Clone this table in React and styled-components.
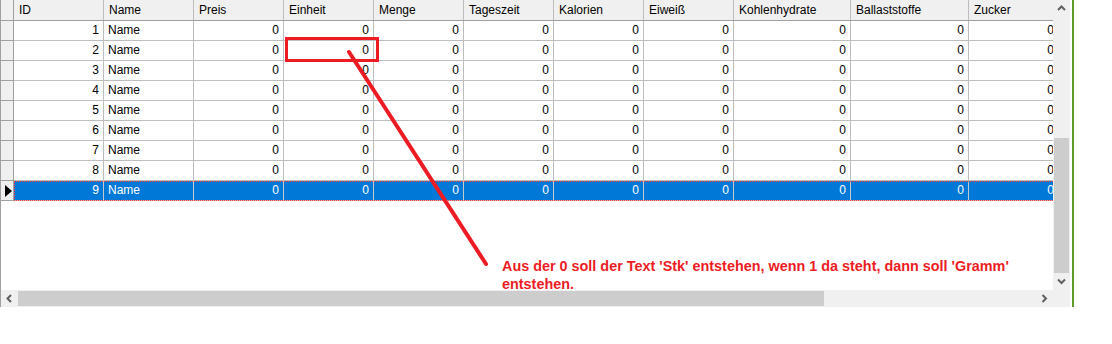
import React from "react";
import styled, { createGlobalStyle } from "styled-components";

const columns = [
  { title: "ID", width: 90, align: "right" },
  { title: "Name", width: 90, align: "left" },
  { title: "Preis", width: 90, align: "right" },
  { title: "Einheit", width: 90, align: "right" },
  { title: "Menge", width: 90, align: "right" },
  { title: "Tageszeit", width: 90, align: "right" },
  { title: "Kalorien", width: 90, align: "right" },
  { title: "Eiweiß", width: 90, align: "right" },
  { title: "Kohlenhydrate", width: 117, align: "right" },
  { title: "Ballaststoffe", width: 118, align: "right" },
  { title: "Zucker", width: 90, align: "right" },
];

const rows = [1, 2, 3, 4, 5, 6, 7, 8, 9].map((id) => [
  String(id),
  "Name",
  "0",
  "0",
  "0",
  "0",
  "0",
  "0",
  "0",
  "0",
  "0",
]);

const SELECTED = 8;

const Chevron = ({ dir }) => {
  const pts = {
    up: "1,6 4.5,2.5 8,6",
    down: "1,2.5 4.5,6 8,2.5",
    left: "6,1 2.5,4.5 6,8",
    right: "2.5,1 6,4.5 2.5,8",
  }[dir];
  return (
    <svg width="9" height="9" viewBox="0 0 9 9">
      <polyline points={pts} fill="none" stroke="#606060" strokeWidth="2" />
    </svg>
  );
};

const App = () => {
  return (
    <Page>
      <GlobalStyle />
      <Window>
        <Frame>
          <Viewport>
            <HeaderRow>
              <Corner />
              {columns.map((c) => (
                <HeadCell key={c.title} $w={c.width}>
                  {c.title}
                </HeadCell>
              ))}
            </HeaderRow>
            {rows.map((r, i) => (
              <Row key={i}>
                <RowHead>{i === SELECTED && <Pointer />}</RowHead>
                <Cells $selected={i === SELECTED}>
                  {r.map((v, j) => (
                    <Cell
                      key={j}
                      $w={columns[j].width}
                      $align={columns[j].align}
                      $selected={i === SELECTED}
                    >
                      {v}
                    </Cell>
                  ))}
                </Cells>
              </Row>
            ))}
          </Viewport>
          <VScroll>
            <ArrowBox>
              <Chevron dir="up" />
            </ArrowBox>
            <VTrack>
              <VThumb />
            </VTrack>
            <ArrowBox>
              <Chevron dir="down" />
            </ArrowBox>
          </VScroll>
          <HScroll>
            <ArrowBox>
              <Chevron dir="left" />
            </ArrowBox>
            <HTrack>
              <HThumb />
            </HTrack>
            <ArrowBox>
              <Chevron dir="right" />
            </ArrowBox>
          </HScroll>
          <ScrollCorner />
        </Frame>
        <GreenEdge />
      </Window>

      <Marks width="1112" height="344">
        <rect
          x="286.5"
          y="38.5"
          width="91"
          height="22"
          fill="none"
          stroke="#ed1c24"
          strokeWidth="3"
        />
        <line
          x1="349"
          y1="52"
          x2="486"
          y2="264"
          stroke="#ed1c24"
          strokeWidth="4"
          strokeLinecap="round"
        />
      </Marks>
      <Note>
        Aus der 0 soll der Text 'Stk' entstehen, wenn 1 da steht, dann soll
        'Gramm'
        <br />
        entstehen.
      </Note>
    </Page>
  );
};
export default App;

const GlobalStyle = createGlobalStyle`
  html, body {
    margin: 0;
    padding: 0;
    background: #ffffff;
  }
  body {
    font-family: "Liberation Sans", Arial, sans-serif;
    font-size: 12px;
    color: #000000;
  }
`;

const Page = styled.div`
  position: relative;
  width: 1112px;
  height: 344px;
  overflow: hidden;
`;

const Window = styled.div`
  display: flex;
  align-items: stretch;
  height: 307px;
`;

const Frame = styled.div`
  width: 1070px;
  height: 307px;
  display: grid;
  grid-template-columns: 1052px 17px;
  grid-template-rows: 290px 17px;
  border-left: 1px solid #a0a0a0;
  background: #ffffff;
`;

const GreenEdge = styled.div`
  width: 2px;
  margin-left: 1px;
  background: #5d9b2b;
`;

const Viewport = styled.div`
  overflow: hidden;
  background: #ffffff;
`;

const HeaderRow = styled.div`
  display: flex;
  height: 21px;
  background: #f0f0f0;
  border-bottom: 1px solid #a0a0a0;
  box-sizing: border-box;
  width: max-content;
`;

const Corner = styled.div`
  width: 12px;
  flex: none;
  border-right: 1px solid #a0a0a0;
`;

const HeadCell = styled.div`
  width: ${(p) => p.$w}px;
  flex: none;
  box-sizing: border-box;
  border-right: 1px solid #bdbdbd;
  padding-left: 5px;
  line-height: 21px;
  white-space: nowrap;
`;

const Row = styled.div`
  display: flex;
  height: 20px;
  width: max-content;
`;

const RowHead = styled.div`
  width: 12px;
  flex: none;
  background: #f0f0f0;
  border-right: 1px solid #a0a0a0;
  border-bottom: 1px solid #a0a0a0;
  display: flex;
  align-items: center;
  justify-content: center;
`;

const Pointer = styled.div`
  width: 0;
  height: 0;
  margin-left: 2px;
  border-left: 7px solid #000000;
  border-top: 6px solid transparent;
  border-bottom: 6px solid transparent;
`;

const Cells = styled.div`
  display: flex;
  position: relative;
  background: ${(p) => (p.$selected ? "#0078d7" : "#ffffff")};
  &::after {
    content: "";
    display: ${(p) => (p.$selected ? "block" : "none")};
    position: absolute;
    left: 0;
    right: 0;
    top: 0;
    bottom: 0;
    border: 1px dotted #ff3b3b;
    pointer-events: none;
  }
`;

const Cell = styled.div`
  width: ${(p) => p.$w}px;
  flex: none;
  box-sizing: border-box;
  border-right: 1px solid ${(p) => (p.$selected ? "#c8c8c8" : "#bdbdbd")};
  border-bottom: 1px solid #bdbdbd;
  padding: 0 4px;
  text-align: ${(p) => p.$align};
  line-height: 19px;
  color: ${(p) => (p.$selected ? "#ffffff" : "#000000")};
  white-space: nowrap;
`;

const VScroll = styled.div`
  display: flex;
  flex-direction: column;
  background: #f0f0f0;
`;

const HScroll = styled.div`
  display: flex;
  background: #f0f0f0;
`;

const ScrollCorner = styled.div`
  background: #f0f0f0;
`;

const ArrowBox = styled.div`
  width: 17px;
  height: 17px;
  flex: none;
  display: flex;
  align-items: center;
  justify-content: center;
`;

const VTrack = styled.div`
  flex: 1;
  display: flex;
  flex-direction: column;
  padding-top: 121px;
`;

const VThumb = styled.div`
  height: 135px;
  margin: 0 1px;
  background: #cdcdcd;
`;

const HTrack = styled.div`
  flex: 1;
  display: flex;
  align-items: center;
`;

const HThumb = styled.div`
  width: 806px;
  height: 15px;
  background: #cdcdcd;
`;

const Marks = styled.svg`
  position: absolute;
  left: 0;
  top: 0;
  pointer-events: none;
`;

const Note = styled.div`
  position: absolute;
  left: 502px;
  top: 257px;
  font-family: "Liberation Sans", Arial, sans-serif;
  font-weight: bold;
  font-size: 14.4px;
  line-height: 18px;
  color: #ed1c24;
  white-space: nowrap;
`;
